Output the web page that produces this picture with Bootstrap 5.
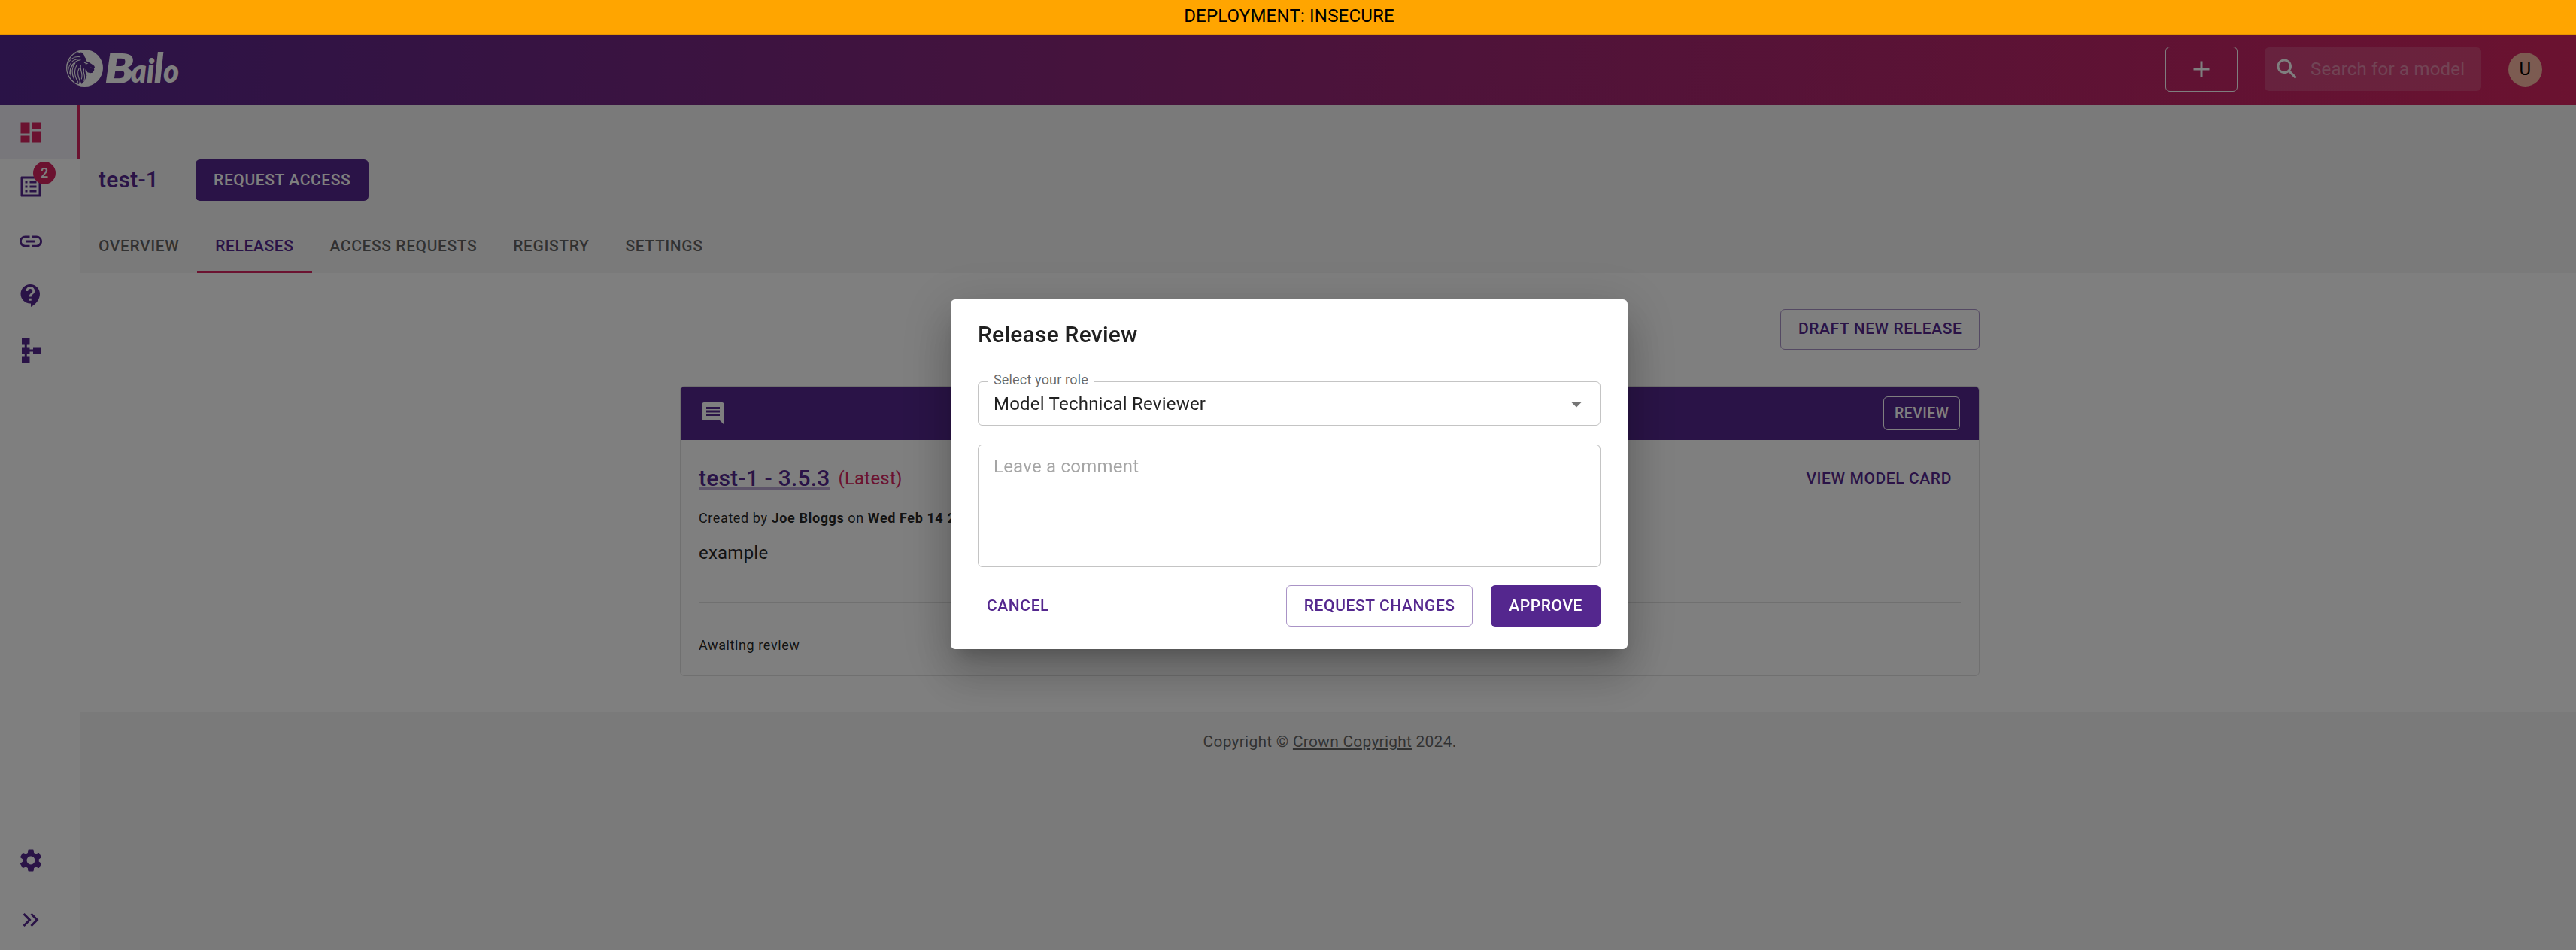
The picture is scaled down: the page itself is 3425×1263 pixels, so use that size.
<!DOCTYPE html>
<html lang="en">
<head>
<meta charset="utf-8">
<meta name="viewport" content="width=device-width, initial-scale=1">
<title>Bailo - test-1 releases</title>
<link href="https://cdn.jsdelivr.net/npm/bootstrap@5.3.0/dist/css/bootstrap.min.css" rel="stylesheet">
<style>
:root{--brand:#54278e;--accent:#d62560;--line:#e0e0e0}
body{font-family:Roboto,"Liberation Sans",sans-serif;font-size:24px;line-height:36px;letter-spacing:.225px;color:rgba(0,0,0,.87);background:#f5f5f5;height:1263px;overflow:hidden}
svg{display:block;flex:none}
.ico{width:36px;height:36px;fill:currentColor}
/* deployment banner stays above the backdrop */
.deploy-banner{position:relative;z-index:1060;height:46px;line-height:42px;background:#ffa500;border-bottom:1px solid #e69500;color:#000;letter-spacing:.2px;padding-left:3px}
.topbar{height:94px;background:linear-gradient(276deg,#d62560 0%,#54278e 100%);color:#fff;padding:0 45px 0 88px}
.brand-logo{overflow:visible}
.add-btn{width:96px;height:60px;border:1px solid #fff;border-radius:6px;margin-right:36px;margin-top:-2px}
.search-box{width:288px;height:58px;border-radius:6px;background:rgba(255,255,255,.15);padding-left:12px;margin-right:36px;margin-top:-2px}
.search-box input{width:222px;margin-left:13px;border:0;background:none;padding:0;color:#fff;font:inherit;letter-spacing:.2px;outline:0}
.search-box input::placeholder{color:#fff;opacity:.36}
.user-dot{width:45px;height:45px;border-radius:50%;background:#f8b6a2;color:#000;line-height:44px;margin-top:-1px}
.side{width:107px;background:#fff;border-right:1px solid var(--line);color:var(--brand)}
.side a{height:72px;padding-left:23px;color:inherit}
.side a.on{background:#f1eef6;border-right:3px solid var(--accent);color:var(--accent)}
.side .rule{height:1px;background:var(--line)}
.side .last{height:82px;padding-top:2px}
.count-dot{position:absolute;left:21px;top:-15px;width:30px;height:30px;border-radius:15px;background:var(--accent);color:#fff;font-size:18px;font-weight:500;line-height:30px;text-align:center;letter-spacing:0}
.bb{font-size:21px;font-weight:500;letter-spacing:.6px;line-height:36.75px;text-transform:uppercase;border-radius:6px;padding:8px 23px;height:55px;border:1px solid transparent;color:var(--brand);white-space:nowrap}
.bb-fill{background:var(--brand);color:#fff}
.bb-line{border-color:rgba(84,39,142,.5);padding:8px 22.500px}
.bb-text{padding:8px 12px;border:0}
.bb-draft{height:54px;padding-top:7px}
.page-head{height:223px;padding-top:72px}
.page-title{font-size:30px;font-weight:500;color:var(--brand);letter-spacing:.225px;line-height:48px;margin:-2px 0 0;padding-left:24px}
.vrule{width:1px;height:55px;background:var(--line);margin:0 24px}
.tab-strip{margin-top:24px}
.tab-strip a{height:72px;padding:0 24px;line-height:72px;font-size:21px;font-weight:500;letter-spacing:.59px;color:rgba(0,0,0,.6);text-decoration:none}
.tab-strip a.on{color:var(--brand);box-shadow:inset 0 -3px var(--accent)}
.panel{background:#fff;height:584px;padding-top:48px}
.wrap{width:1728px;margin-left:797px}
.rel{border:1px solid var(--line);border-radius:6px;height:386px;margin-top:48px;overflow:hidden}
.rel-head{height:71px;background:var(--brand);color:#fff;padding:0 25px}
.bb-sm{font-size:19.5px;line-height:33px;height:45px;padding:5px 13.500px;letter-spacing:.5px;color:#fff;border-color:#fff}
.rel-body{padding:0 24px}
.rel-title{font-size:30px;font-weight:500;line-height:48px;letter-spacing:.2px;margin-top:-2px;color:var(--brand);text-decoration:underline;text-decoration-color:rgba(84,39,142,.4);text-decoration-thickness:3px;text-underline-offset:2px;text-decoration-skip-ink:none}
.latest{color:var(--accent);margin:-1px 0 0 11px}
.cap{font-size:18px;line-height:30px;letter-spacing:.6px}
.created{margin-top:10px}
.desc{margin-top:13px}
.sep{height:1px;background:var(--line);margin-top:48px}
.waiting{margin-top:41px}
.foot{font-size:21px;line-height:30px;letter-spacing:.225px;color:rgba(0,0,0,.6);padding-top:24px;padding-left:4px}
.foot a{color:inherit;text-decoration-thickness:2px;text-underline-offset:2px}
.modal{padding:0 0 2px 3px}
.modal-dialog{max-width:900px;margin:0 auto;min-height:100%}
.modal-content{border:0;border-radius:6px;height:465px;padding:0 36px;color:rgba(0,0,0,.87);box-shadow:0 16.5px 22.5px -10.5px rgba(0,0,0,.2),0 36px 57px 4.5px rgba(0,0,0,.14),0 13.5px 69px 12px rgba(0,0,0,.12)}
.modal-title{font-size:30px;font-weight:500;line-height:48px;letter-spacing:.225px;padding-top:23px}
.pick{position:relative;height:59px;border:1px solid rgba(0,0,0,.23);border-radius:6px;margin-top:38px;padding:0 13px 0 20px}
.pick-label{position:absolute;left:12px;top:-18px;padding:0 8px;background:#fff;font-size:18px;line-height:30px;letter-spacing:.17px;color:rgba(0,0,0,.6)}
.note{display:block;width:100%;height:163px;border:1px solid rgba(0,0,0,.23);border-radius:6px;margin-top:25px;padding:10px 20px;font:inherit;letter-spacing:.225px;resize:none}
.note::placeholder{color:#000;opacity:.35}
</style>
<script src="https://cdn.jsdelivr.net/npm/bootstrap@5.3.0/dist/js/bootstrap.bundle.min.js"></script>
</head>
<body class="d-flex flex-column">
<div class="deploy-banner text-center flex-shrink-0">DEPLOYMENT: INSECURE</div>
<header class="topbar d-flex align-items-center flex-shrink-0">
  <svg width="160" height="54" viewBox="0 0 160 54" class="brand-logo me-auto" role="img" aria-label="Bailo">
    <g transform="translate(0 0) scale(.3333) translate(-264 -198)">
      <circle cx="337.500" cy="271.500" r="73.500" fill="#fff"/>
      <path fill="#512688" d="M303 208c8 0 15 2 21 6l-2-7c10 6 14 11 16 20l5 8 1 9 5 2c9 5 20 12 27 17l2 6-3 5 1 5-5 9c-4 5-16 4-22 1l-4-9-4-3c-3 8 2 16 5 24-4 12-8 25-20 34-5-4-7-10-8-14l-3 15c-12-3-22-10-29-19-11-12-18-26-18-44 0-21 9-39 21-52 6-5 11-8 18-9z"/>
      <g fill="none" stroke="#fff" stroke-width="3.200" stroke-linecap="round">
        <path d="M320 227c-26-3-43 11-50 30"/><path d="M312 236c-23 0-36 20-40 44"/><path d="M321 239c-28 5-42 27-43 56"/><path d="M300 251c-17 22-15 42-4 66"/><path d="M308 258c-16 23-11 45 3 70"/><path d="M316 272c-11 17-3 35 5 57"/><path d="M322 262c-5 17 11 31 3 53"/><path d="M335 275c-7 15 9 26 0 47"/><path d="M292 257c-14 16-14 35-8 50"/><path d="M337 250l10 4-5 1"/><path d="M361 271l11 1"/>
      </g>
    </g>
    <g font-family="Lato,sans-serif" font-weight="800" font-style="italic" letter-spacing="0" fill="#fff">
      <text x="51" y="45" font-size="54" textLength="39" lengthAdjust="spacingAndGlyphs">B</text>
      <text x="86" y="44" font-size="44" textLength="64" lengthAdjust="spacingAndGlyphs">ai<tspan font-size="54">l</tspan>o</text>
    </g>
  </svg>
  <button class="add-btn btn p-0 d-flex align-items-center justify-content-center text-white" aria-label="Add"><svg class="ico" viewBox="0 0 24 24"><path d="M19 13h-6v6h-2v-6H5v-2h6V5h2v6h6z"/></svg></button>
  <div class="search-box d-flex align-items-center">
    <svg class="ico" viewBox="0 0 24 24"><path d="M15.500 14h-.79l-.28-.27C15.410 12.590 16 11.110 16 9.500 16 5.910 13.090 3 9.500 3S3 5.910 3 9.500 5.910 16 9.500 16c1.610 0 3.090-.59 4.230-1.570l.27.28v.79l5 4.990L20.490 19zm-6 0C7.010 14 5 11.990 5 9.500S7.010 5 9.500 5 14 7.010 14 9.500 11.990 14 9.500 14"/></svg>
    <input type="text" placeholder="Search for a model">
  </div>
  <div class="user-dot text-center">U</div>
</header>
<div class="d-flex flex-grow-1">
  <nav class="side d-flex flex-column flex-shrink-0">
    <a href="#" class="on d-flex align-items-center"><svg class="ico" viewBox="0 0 24 24"><path d="M3 13h8V3H3zm0 8h8v-6H3zm10 0h8V11h-8zm0-18v6h8V3z"/></svg></a>
    <a href="#" class="d-flex align-items-center"><span class="position-relative"><svg class="ico" viewBox="0 0 24 24"><path d="M19 5v14H5V5zm1.100-2H3.900c-.5 0-.9.400-.9.900v16.200c0 .400.400.900.900.900h16.200c.400 0 .900-.5.900-.9V3.900c0-.5-.5-.9-.9-.9M11 7h6v2h-6zm0 4h6v2h-6zm0 4h6v2h-6zM7 7h2v2H7zm0 4h2v2H7zm0 4h2v2H7z"/></svg><span class="count-dot">2</span></span></a>
    <div class="rule"></div>
    <a href="#" class="d-flex align-items-center"><svg class="ico" viewBox="0 0 24 24"><path d="M3.900 12c0-1.710 1.390-3.100 3.100-3.100h4V7H7c-2.760 0-5 2.240-5 5s2.240 5 5 5h4v-1.900H7c-1.710 0-3.100-1.390-3.100-3.100M8 13h8v-2H8zm9-6h-4v1.900h4c1.710 0 3.100 1.390 3.100 3.100s-1.390 3.100-3.100 3.100h-4V17h4c2.760 0 5-2.240 5-5s-2.240-5-5-5"/></svg></a>
    <a href="#" class="d-flex align-items-center"><svg class="ico" viewBox="0 0 24 24"><path d="M11.500 2C6.810 2 3 5.810 3 10.500S6.810 19 11.500 19h.5v3c4.860-2.340 8-7 8-11.500C20 5.810 16.190 2 11.500 2m1 14.500h-2v-2h2zm0-3.500h-2c0-3.250 3-3 3-5 0-1.100-.9-2-2-2s-2 .9-2 2h-2c0-2.210 1.790-4 4-4s4 1.790 4 4c0 2.500-3 2.750-3 5"/></svg></a>
    <div class="rule"></div>
    <a href="#" class="d-flex align-items-center"><svg class="ico" viewBox="0 0 24 24"><path d="M14 9v2h-3V9H8.500V7H11V1H4v6h2.500v2H4v6h2.500v2H4v6h7v-6H8.500v-2H11v-2h3v2h7V9z"/></svg></a>
    <div class="rule"></div>
    <div class="rule mt-auto"></div>
    <a href="#" class="d-flex align-items-center"><svg class="ico" viewBox="0 0 24 24"><path d="M19.140 12.940c.040-.3.060-.61.060-.94 0-.32-.02-.64-.07-.94l2.030-1.580c.180-.14.230-.41.120-.61l-1.920-3.320c-.12-.22-.37-.29-.59-.22l-2.390.960c-.5-.38-1.030-.7-1.620-.94l-.36-2.540c-.04-.24-.24-.41-.48-.41h-3.840c-.24 0-.43.170-.47.410l-.36 2.540c-.59.240-1.130.570-1.620.940l-2.390-.96c-.22-.08-.47 0-.59.220L2.740 8.870c-.12.210-.08.470.120.610l2.030 1.580c-.05.300-.09.630-.09.940s.020.640.070.940l-2.030 1.580c-.18.140-.23.410-.12.610l1.920 3.320c.120.220.370.290.590.220l2.390-.96c.500.380 1.030.700 1.620.940l.360 2.540c.050.240.240.410.480.410h3.840c.240 0 .440-.17.470-.41l.360-2.540c.590-.24 1.130-.56 1.620-.94l2.390.960c.220.080.470 0 .590-.22l1.920-3.320c.120-.22.070-.47-.12-.61zM12 15.600c-1.980 0-3.600-1.620-3.600-3.600s1.620-3.600 3.600-3.600 3.600 1.620 3.600 3.600-1.620 3.600-3.600 3.600"/></svg></a>
    <div class="rule"></div>
    <a href="#" class="last d-flex align-items-center"><svg class="ico" viewBox="0 0 24 24"><path d="M6.410 6 5 7.410 9.580 12 5 16.590 6.410 18l6-6z"/><path d="m13 6-1.410 1.410L16.170 12l-4.580 4.590L13 18l6-6z"/></svg></a>
  </nav>
  <main class="flex-grow-1">
    <section class="page-head">
      <div class="d-flex align-items-center">
        <h1 class="page-title">test-1</h1><div class="vrule"></div>
        <button class="bb bb-fill">Request access</button>
      </div>
      <nav class="tab-strip d-flex">
        <a href="#">OVERVIEW</a><a href="#" class="on">RELEASES</a><a href="#">ACCESS REQUESTS</a><a href="#">REGISTRY</a><a href="#">SETTINGS</a>
      </nav>
    </section>
    <section class="panel">
      <div class="wrap">
        <div class="d-flex justify-content-end"><button class="bb bb-line bb-draft bg-transparent">Draft new release</button></div>
        <article class="rel">
          <div class="rel-head d-flex align-items-center justify-content-between">
            <svg class="ico" viewBox="0 0 24 24"><path d="M21.990 4c0-1.100-.89-2-1.990-2H4c-1.100 0-2 .9-2 2v12c0 1.100.900 2 2 2h14l4 4zM18 14H6v-2h12zm0-3H6V9h12zm0-3H6V6h12z"/></svg>
            <button class="bb bb-sm bg-transparent">Review</button>
          </div>
          <div class="rel-body">
            <div class="d-flex justify-content-between align-items-center pt-4">
              <div class="d-flex align-items-center"><a href="#" class="rel-title">test-1 - 3.5.3</a><span class="latest">(Latest)</span></div>
              <button class="bb bb-text bg-transparent">View model card</button>
            </div>
            <div class="cap created">Created by <b>Joe Bloggs</b> on <b>Wed Feb 14 2024</b></div>
            <div class="desc">example</div>
            <div class="sep"></div>
            <div class="cap waiting">Awaiting review</div>
          </div>
        </article>
      </div>
    </section>
    <footer class="foot text-center">Copyright © <a href="#">Crown Copyright</a> 2024.</footer>
  </main>
</div>
<div class="modal-backdrop show"></div>
<div class="modal d-block" role="dialog">
  <div class="modal-dialog d-flex align-items-center">
    <div class="modal-content">
      <h2 class="modal-title">Release Review</h2>
      <div class="pick d-flex align-items-center justify-content-between">
        <span class="pick-label">Select your role</span>
        <span>Model Technical Reviewer</span>
        <svg class="ico" viewBox="0 0 24 24" style="color:rgba(0,0,0,.54)"><path d="m7 10 5 5 5-5z"/></svg>
      </div>
      <textarea class="note" placeholder="Leave a comment"></textarea>
      <div class="d-flex align-items-center mt-4">
        <button class="bb bb-text bg-transparent me-auto">Cancel</button>
        <button class="bb bb-line bg-transparent me-4">Request changes</button>
        <button class="bb bb-fill">Approve</button>
      </div>
    </div>
  </div>
</div>
</body>
</html>
